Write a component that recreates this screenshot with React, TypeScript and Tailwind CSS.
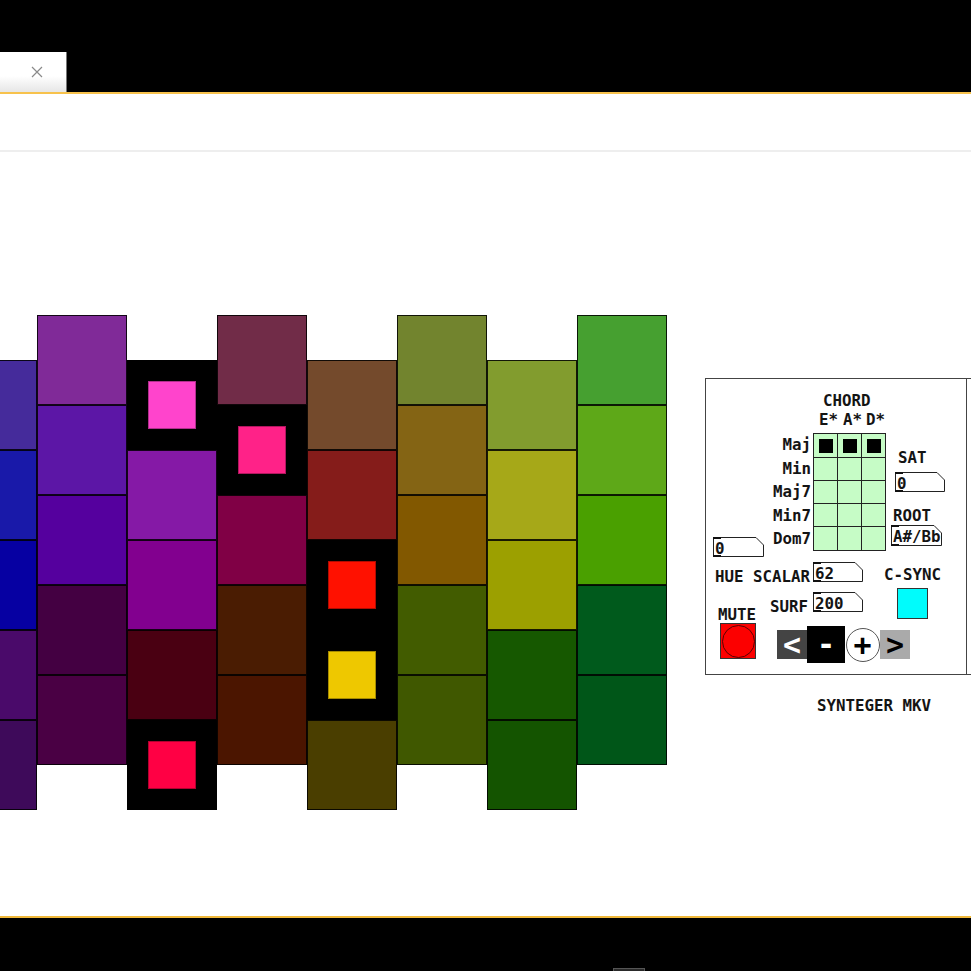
import React from "react";

type Cell = { bg: string } | { dot: string };

type Column = { high: boolean; cells: Cell[] };

const columns: Column[] = [
  {
    high: false,
    cells: [
      { bg: "bg-[#452b9b]" },
      { bg: "bg-[#1919a9]" },
      { bg: "bg-[#0600a2]" },
      { bg: "bg-[#4a0a6a]" },
      { bg: "bg-[#3e0a5a]" },
    ],
  },
  {
    high: true,
    cells: [
      { bg: "bg-[#802a98]" },
      { bg: "bg-[#5c16a6]" },
      { bg: "bg-[#55009e]" },
      { bg: "bg-[#440042]" },
      { bg: "bg-[#4a0044]" },
    ],
  },
  {
    high: false,
    cells: [
      { dot: "bg-[#ff44cc]" },
      { bg: "bg-[#8519a6]" },
      { bg: "bg-[#82008f]" },
      { bg: "bg-[#4a0012]" },
      { dot: "bg-[#ff0044]" },
    ],
  },
  {
    high: true,
    cells: [
      { bg: "bg-[#712c48]" },
      { dot: "bg-[#ff2288]" },
      { bg: "bg-[#800045]" },
      { bg: "bg-[#4a1c02]" },
      { bg: "bg-[#4b1500]" },
    ],
  },
  {
    high: false,
    cells: [
      { bg: "bg-[#744a2c]" },
      { bg: "bg-[#851c1a]" },
      { dot: "bg-[#ff1100]" },
      { dot: "bg-[#eec800]" },
      { bg: "bg-[#4a3e00]" },
    ],
  },
  {
    high: true,
    cells: [
      { bg: "bg-[#72842e]" },
      { bg: "bg-[#846414]" },
      { bg: "bg-[#825800]" },
      { bg: "bg-[#425c00]" },
      { bg: "bg-[#405800]" },
    ],
  },
  {
    high: false,
    cells: [
      { bg: "bg-[#829c2e]" },
      { bg: "bg-[#a6a818]" },
      { bg: "bg-[#9ca000]" },
      { bg: "bg-[#165800]" },
      { bg: "bg-[#145400]" },
    ],
  },
  {
    high: true,
    cells: [
      { bg: "bg-[#46a030]" },
      { bg: "bg-[#5ea818]" },
      { bg: "bg-[#4aa000]" },
      { bg: "bg-[#005a1c]" },
      { bg: "bg-[#005618]" },
    ],
  },
];

const Tile = ({ cell }: { cell: Cell }) => {
  if ("dot" in cell) {
    return (
      <div className="flex h-[90px] w-[90px] items-center justify-center bg-black">
        <div className={`h-[48px] w-[48px] border border-black/30 ${cell.dot}`} />
      </div>
    );
  }
  return <div className={`h-[90px] w-[90px] border border-black/85 ${cell.bg}`} />;
};

// pd style number box with the clipped top-right corner
const NumBox = ({
  value,
  className,
  w,
  h,
}: {
  value: string;
  className: string;
  w: number;
  h: number;
}) => (
  <div className={`absolute ${className}`}>
    <svg width={w} height={h} className="absolute left-0 top-0">
      <polygon
        points={`0.5,0.5 ${w - 8},0.5 ${w - 0.5},8 ${w - 0.5},${h - 0.5} 0.5,${h - 0.5}`}
        fill="white"
        stroke="#222"
        strokeWidth="1"
      />
      <line x1="0" y1="1" x2="8" y2="1" stroke="#111" strokeWidth="2" />
      <line x1="0" y1={h - 1} x2="8" y2={h - 1} stroke="#111" strokeWidth="2" />
    </svg>
    <span className="relative pl-[2px] text-[15.8px] leading-[20px]">{value}</span>
  </div>
);

const Label = ({ text, className }: { text: string; className: string }) => (
  <span className={`absolute text-[15.8px] leading-[16px] ${className}`}>{text}</span>
);

const chordRows = ["Maj", "Min", "Maj7", "Min7", "Dom7"];

const Panel = () => (
  <div className="relative h-[297px] w-[290px] border border-[#444] font-['DejaVu_Sans_Mono',monospace] font-bold text-[#141414]">
    <div className="absolute left-[260px] top-0 h-full w-px bg-[#444]" />

    <Label text="CHORD" className="left-[117px] top-[14px]" />
    <Label text="E*" className="left-[113px] top-[33px]" />
    <Label text="A*" className="left-[137px] top-[33px]" />
    <Label text="D*" className="left-[160px] top-[33px]" />

    <div className="absolute left-[58px] top-[58px] flex w-[47px] flex-col items-end gap-[7.6px]">
      {chordRows.map((r) => (
        <span key={r} className="text-[15.8px] leading-[16px]">
          {r}
        </span>
      ))}
    </div>

    <div className="absolute left-[107px] top-[54px] grid grid-cols-[23px_23px_23px] grid-rows-[23px_22px_22px_22px_23px] gap-px bg-[#222] p-px">
      {Array.from({ length: 15 }).map((_, i) => (
        <div key={i} className="flex items-center justify-center bg-[#c6fcc6]">
          {i < 3 && <div className="h-[14px] w-[14px] bg-black" />}
        </div>
      ))}
    </div>

    <Label text="SAT" className="left-[192px] top-[71px]" />
    <NumBox value="0" className="left-[189px] top-[93px]" w={50} h={20} />

    <Label text="ROOT" className="left-[187px] top-[129px]" />
    <NumBox value="A#/Bb" className="left-[185px] top-[146px]" w={51} h={21} />

    <NumBox value="0" className="left-[7px] top-[158px]" w={51} h={20} />

    <Label text="HUE SCALAR" className="left-[9px] top-[190px]" />
    <NumBox value="62" className="left-[107px] top-[183px]" w={50} h={20} />

    <Label text="SURF" className="left-[64px] top-[220px]" />
    <NumBox value="200" className="left-[107px] top-[213px]" w={50} h={20} />

    <Label text="C-SYNC" className="left-[178px] top-[188px]" />
    <div className="absolute left-[191px] top-[209px] h-[31px] w-[31px] border border-[#333] bg-[#00fcfc]" />

    <Label text="MUTE" className="left-[12px] top-[228px]" />
    <div className="absolute left-[14px] top-[244px] flex h-[36px] w-[36px] items-center justify-center border border-[#333] bg-[#fc0000]">
      <div className="h-[33px] w-[33px] rounded-full border border-[#5a0000]" />
    </div>

    <div className="absolute left-[71px] top-[247px] flex items-center">
      <div className="flex h-[29px] w-[30px] items-center justify-center bg-[#444] text-[30px] leading-none text-white">
        &lt;
      </div>
      <div className="flex h-[37px] w-[38px] items-center justify-center bg-black text-[30px] leading-none text-white">
        -
      </div>
      <div className="flex h-[37px] w-[35px] items-center justify-center bg-white">
        <div className="flex h-[34px] w-[34px] items-center justify-center rounded-full border border-[#555] text-[30px] leading-none text-black">
          +
        </div>
      </div>
      <div className="flex h-[29px] w-[30px] items-center justify-center bg-[#aaa] text-[30px] leading-none text-black">
        &gt;
      </div>
    </div>
  </div>
);

export default function App() {
  return (
    <div className="flex h-[971px] w-[971px] flex-col overflow-hidden bg-white">
      <div className="h-[52px] bg-black" />
      <div className="flex h-[40px] bg-black">
        <div className="flex w-[67px] items-center justify-end border-r border-[#777] bg-gradient-to-b from-white from-60% to-[#e6e6e6] pr-[23px]">
          <svg width="12" height="12" viewBox="0 0 12 12">
            <path d="M1 1L11 11M11 1L1 11" stroke="#8a8a8a" strokeWidth="1.2" />
          </svg>
        </div>
      </div>
      <div className="h-[2px] bg-[#f7c24c]" />
      <div className="h-[58px] border-b-2 border-[#eeeeee] bg-white" />

      <div className="flex h-[764px] bg-white">
        <div className="ml-[-53px] flex shrink-0">
          {columns.map((col, i) => (
            <div key={i} className={`flex flex-col ${col.high ? "mt-[163px]" : "mt-[208px]"}`}>
              {col.cells.map((c, j) => (
                <Tile key={j} cell={c} />
              ))}
            </div>
          ))}
        </div>
        <div className="ml-[38px] mt-[226px] flex shrink-0 flex-col">
          <Panel />
          <span className="ml-[112px] mt-[23px] font-['DejaVu_Sans_Mono',monospace] text-[15.8px] font-bold leading-[16px] text-[#141414]">
            SYNTEGER MKV
          </span>
        </div>
      </div>

      <div className="h-[2px] bg-[#f0b83a]" />
      <div className="relative flex flex-1 items-end bg-black">
        <div className="ml-[613px] h-[3px] w-[32px] border border-b-0 border-[#555] bg-[#2a2a2a]" />
      </div>
    </div>
  );
}
